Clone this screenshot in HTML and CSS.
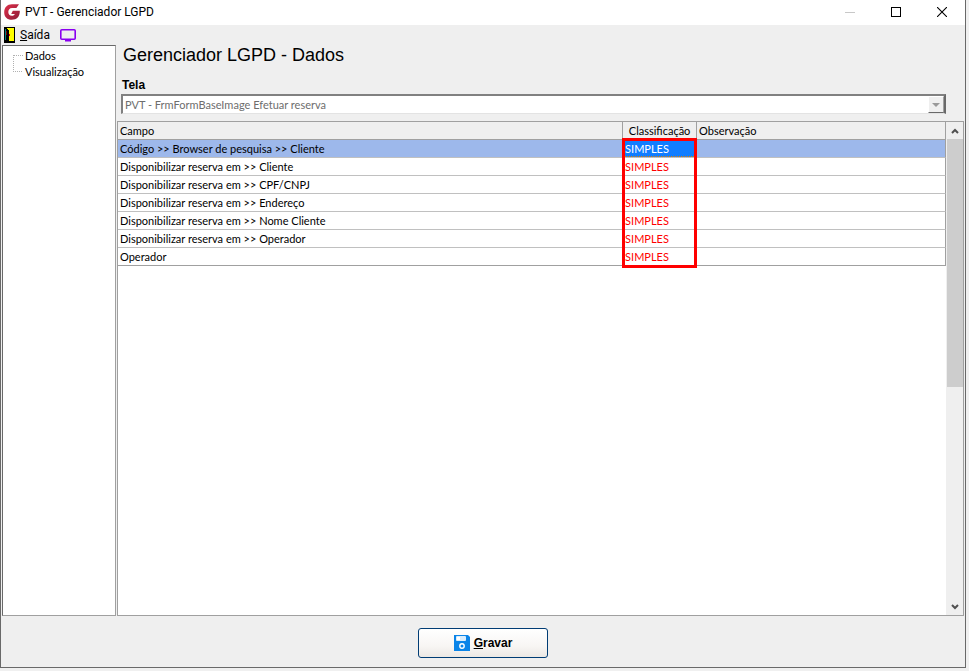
FILE: index.html
```html
<!DOCTYPE html>
<html lang="pt-BR">
<head>
  <meta charset="UTF-8">
  <meta name="viewport" content="width=device-width, initial-scale=1.0">
  <title>PVT - Gerenciador LGPD</title>
  <link rel="stylesheet" href="styles.css">
</head>
<body>
  <div class="window">
    <header class="titlebar">
      <svg class="logo" viewBox="0 0 16 16" width="16" height="16">
        <defs>
          <linearGradient id="logoFill" x1="0" y1="0" x2="1" y2="1">
            <stop offset="0" stop-color="#e0304a"/>
            <stop offset="1" stop-color="#8c1c38"/>
          </linearGradient>
        </defs>
        <path fill="url(#logoFill)" d="M15 0.2 L12.4 4 H8 C5.6 4 4.3 5.8 4.3 8 C4.3 10.4 5.6 11.8 7.8 11.8 C9.4 11.8 10.4 11.2 10.8 10 H7.2 L8.8 6.8 H15.8 C16 12.6 12.8 15.8 7.8 15.8 C3.2 15.8 0.2 12.8 0.2 8.2 C0.2 3.4 3.2 0.2 8 0.2 Z"/>
      </svg>
      <span class="title">PVT - Gerenciador LGPD</span>
      <div class="window-buttons">
        <button class="win-btn" aria-label="Minimizar" disabled>
          <svg width="10" height="10" viewBox="0 0 10 10"><path d="M0 5.5H10" stroke="#c8c8c8"/></svg>
        </button>
        <button class="win-btn" aria-label="Maximizar">
          <svg width="10" height="10" viewBox="0 0 10 10"><rect x="0.5" y="0.5" width="9" height="9" fill="none" stroke="#000"/></svg>
        </button>
        <button class="win-btn" aria-label="Fechar">
          <svg width="10" height="10" viewBox="0 0 10 10"><path d="M0 0L10 10M10 0L0 10" stroke="#000" stroke-width="1.1"/></svg>
        </button>
      </div>
    </header>

    <nav class="toolbar">
      <button class="tool">
        <svg width="11" height="16" viewBox="0 0 11 16" shape-rendering="crispEdges">
          <rect width="11" height="16" fill="#000"/>
          <path d="M3 1H10V14H5V4Z" fill="#ffff00"/>
          <rect x="1" y="2" width="1" height="11" fill="#008080"/>
          <rect x="2" y="4" width="1" height="4" fill="#800000"/>
          <rect x="5" y="7" width="1" height="2" fill="#ff0000"/>
        </svg>
        <span><u>S</u>aída</span>
      </button>
      <button class="tool" aria-label="Monitor">
        <svg width="16" height="14" viewBox="0 0 16 14">
          <rect x="0.8" y="1.8" width="14.4" height="9.4" rx="1" fill="none" stroke="#8a00f0" stroke-width="1.6"/>
          <path d="M5 12.5H11" stroke="#8a00f0" stroke-width="2"/>
        </svg>
      </button>
    </nav>

    <div class="workspace">
      <ul class="tree">
        <li>Dados</li>
        <li>Visualização</li>
      </ul>

      <main class="content">
        <h1>Gerenciador LGPD - Dados</h1>
        <label for="tela">Tela</label>
        <div class="combo">
          <select id="tela" disabled>
            <option>PVT - FrmFormBaseImage Efetuar reserva</option>
          </select>
          <span class="combo-arrow">
            <svg width="8" height="4" viewBox="0 0 8 4"><path d="M0 0H8L4 4Z" fill="#999"/></svg>
          </span>
        </div>

        <div class="grid">
          <div class="grid-body">
            <table>
              <thead>
                <tr>
                  <th class="campo">Campo</th>
                  <th class="classe">Classificação</th>
                  <th>Observação</th>
                </tr>
              </thead>
              <tbody>
                <tr class="selected"><td>Código &gt;&gt; Browser de pesquisa &gt;&gt; Cliente</td><td class="mark">SIMPLES</td><td></td></tr>
                <tr><td>Disponibilizar reserva em &gt;&gt; Cliente</td><td class="mark">SIMPLES</td><td></td></tr>
                <tr><td>Disponibilizar reserva em &gt;&gt; CPF/CNPJ</td><td class="mark">SIMPLES</td><td></td></tr>
                <tr><td>Disponibilizar reserva em &gt;&gt; Endereço</td><td class="mark">SIMPLES</td><td></td></tr>
                <tr><td>Disponibilizar reserva em &gt;&gt; Nome Cliente</td><td class="mark">SIMPLES</td><td></td></tr>
                <tr><td>Disponibilizar reserva em &gt;&gt; Operador</td><td class="mark">SIMPLES</td><td></td></tr>
                <tr><td>Operador</td><td class="mark">SIMPLES</td><td></td></tr>
              </tbody>
            </table>
          </div>
          <div class="scrollbar">
            <button class="scroll-btn" aria-label="Rolar para cima">
              <svg width="8" height="6" viewBox="0 0 8 6"><path d="M1 5L4 2L7 5" fill="none" stroke="#505050" stroke-width="2"/></svg>
            </button>
            <div class="track"><div class="thumb"></div></div>
            <button class="scroll-btn" aria-label="Rolar para baixo">
              <svg width="8" height="6" viewBox="0 0 8 6"><path d="M1 1L4 4L7 1" fill="none" stroke="#505050" stroke-width="2"/></svg>
            </button>
          </div>
        </div>
      </main>
    </div>

    <footer class="footer">
      <button class="save">
        <svg width="16" height="16" viewBox="0 0 16 16">
          <path d="M0 0H14L16 2V16H0Z" fill="#0a84e8"/>
          <rect x="2" y="1" width="10" height="5" rx="1" fill="#d8ecfc"/>
          <rect x="3" y="2" width="3" height="3" fill="#fff"/>
          <circle cx="8" cy="11" r="2.2" fill="#0a84e8" stroke="#fff" stroke-width="1.4"/>
        </svg>
        <span><u>G</u>ravar</span>
      </button>
    </footer>
  </div>
</body>
</html>
```
FILE: styles.css
```css
:root {
  --face: #efefef;
  --line: #a0a0a0;
  --dark: #696969;
  --red: #ff0000;
}

* {
  box-sizing: border-box;
}

body {
  margin: 0;
  background: #f0f0f0;
  color: #000;
  font-family: Lato, "Liberation Sans", Arial, sans-serif;
  font-size: 11px;
}

button {
  font: inherit;
  color: inherit;
  border: none;
  background: none;
  padding: 0;
}

svg {
  display: block;
  flex: none;
}

.window {
  display: flex;
  flex-direction: column;
  height: calc(100vh - 3px);
  margin-right: 3px;
  background: var(--face);
  border: 1px solid var(--dark);
  border-top: none;
}

.titlebar {
  display: flex;
  align-items: center;
  height: 25px;
  padding: 0 0 1px 3px;
  gap: 5px;
  background: #fff;
  font-family: Roboto, "Segoe UI", sans-serif;
  font-size: 12px;
}

.titlebar .title {
  flex: 1;
}

.window-buttons {
  display: flex;
}

.win-btn {
  display: flex;
  align-items: center;
  justify-content: center;
  width: 46px;
  height: 24px;
}

.toolbar {
  display: flex;
  align-items: center;
  height: 19px;
  margin-bottom: 1px;
  padding-left: 3px;
  gap: 10px;
  font-family: Roboto, "Segoe UI", sans-serif;
  font-size: 12px;
}

.tool {
  display: flex;
  align-items: center;
  gap: 5px;
}

.workspace {
  display: flex;
  flex: 1;
  min-height: 0;
  gap: 1px;
  padding: 0 1px;
}

.tree {
  width: 114px;
  margin: 0;
  padding: 1px 0 0 10px;
  list-style: none;
  background: #fff;
  border: 1px solid var(--line);
  border-top-color: var(--dark);
  border-left-color: var(--dark);
}

.tree li {
  position: relative;
  height: 16px;
  padding-left: 12px;
  line-height: 17px;
}

/* dotted connectors */
.tree li::before {
  content: "";
  position: absolute;
  left: 0;
  top: 8px;
  width: 9px;
  height: 16px;
  border-top: 1px dotted #b0b0b0;
  border-left: 1px dotted #b0b0b0;
}

.tree li:last-child::before {
  height: 1px;
  border-left: none;
}

.content {
  display: flex;
  flex-direction: column;
  flex: 1;
  min-width: 0;
}

.content h1 {
  margin: 0 0 0 6px;
  font-family: "Liberation Sans", Arial, sans-serif;
  font-size: 18px;
  font-weight: normal;
  line-height: 20px;
}

.content label {
  margin: 13px 0 1px 5px;
  font-family: "Liberation Sans", Arial, sans-serif;
  font-size: 12px;
  font-weight: bold;
  line-height: 15px;
}

.combo {
  display: flex;
  height: 20px;
  margin: 0 18px 7px 4px;
  background: #fff;
  border: 2px solid var(--dark);
  border-top-color: #808080;
  border-left-color: #808080;
  border-bottom: 1px solid #e3e3e3;
}

.combo select {
  flex: 1;
  min-width: 0;
  padding: 0 2px;
  appearance: none;
  border: none;
  background: #fff;
  color: #6d6d6d;
  font: inherit;
  opacity: 1;
}

.combo-arrow {
  display: flex;
  align-items: center;
  justify-content: center;
  width: 16px;
  background: var(--face);
  border: 1px solid #fff;
  border-right-color: var(--line);
  border-bottom-color: var(--dark);
}

.grid {
  display: flex;
  flex: 1;
  min-height: 0;
  background: #fff;
  border: 1px solid var(--line);
}

.grid-body {
  flex: 1;
  min-width: 0;
}

table {
  width: 100%;
  table-layout: fixed;
  border-spacing: 0;
}

th,
td {
  height: 18px;
  padding: 1px 2px 0;
  border-right: 1px solid #c0c0c0;
  border-bottom: 1px solid #c0c0c0;
  line-height: 16px;
  text-align: left;
  white-space: nowrap;
}

th {
  background: var(--face);
  border-color: var(--line);
  font-weight: normal;
}

td {
  border-right-color: transparent;
}

td:last-child {
  border-right-color: var(--line);
}

tr:last-child td {
  border-bottom-color: var(--line);
}

.campo {
  width: 61%;
}

.classe {
  width: 74px;
  text-align: center;
}

.selected td {
  background: #9db8eb;
}

/* red frame around the classification column */
.mark {
  position: relative;
  color: var(--red);
}

.mark::after {
  content: "";
  position: absolute;
  inset: 0 -1px -1px;
  border: solid var(--red);
  border-width: 0 3px;
}

.selected .mark {
  background: #117dff;
  color: #fff;
}

.selected .mark::after {
  top: -2px;
  border-top-width: 3px;
}

.selected .mark::before {
  content: "";
  position: absolute;
  inset: auto 0 0;
  border-bottom: 1px dotted #e08000;
}

tr:last-child .mark::after {
  bottom: -3px;
  border-bottom-width: 3px;
}

.scrollbar {
  display: flex;
  flex-direction: column;
  width: 17px;
  padding-left: 1px;
  background: var(--face);
}

.scroll-btn {
  display: flex;
  align-items: center;
  justify-content: center;
  height: 17px;
}

.track {
  flex: 1;
}

.thumb {
  height: 54%;
  background: #cdcdcd;
}

.footer {
  display: flex;
  justify-content: center;
  align-items: center;
  height: 51px;
  padding-top: 2px;
}

.save {
  display: flex;
  align-items: center;
  justify-content: center;
  gap: 4px;
  width: 130px;
  height: 30px;
  border: 1px solid #003c74;
  border-radius: 3px;
  background: linear-gradient(#fff, #f8f6f4 60%, #ece8e4);
  font-family: "Liberation Sans", Arial, sans-serif;
  font-size: 12px;
  font-weight: bold;
}
```
